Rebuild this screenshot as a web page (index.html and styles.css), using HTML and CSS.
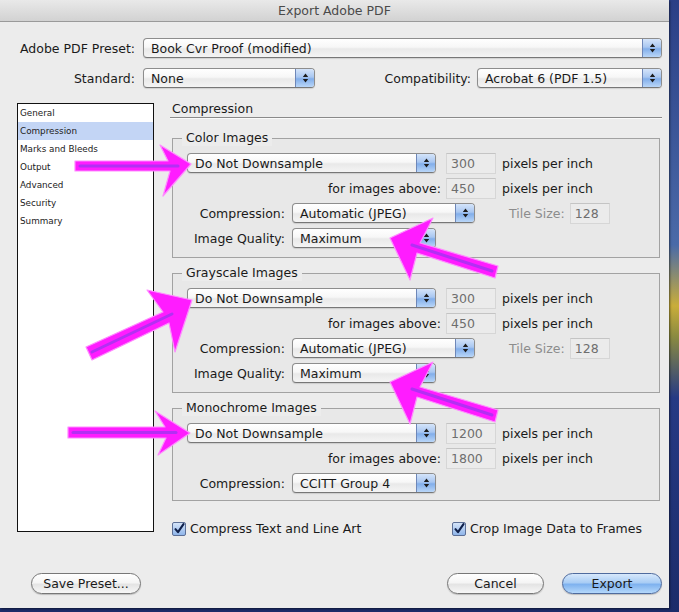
FILE: index.html
```html
<!DOCTYPE html>
<html>
<head>
<meta charset="utf-8">
<title>Export Adobe PDF</title>
<link rel="stylesheet" href="styles.css">
</head>
<body>
<div class="window">
  <div class="titlebar">Export Adobe PDF</div>
  <div class="content">
    <div class="row top-row">
      <span class="lbl lbl-top">Adobe PDF Preset:</span>
      <div class="popup popup-preset"><span class="ptext">Book Cvr Proof (modified)</span><span class="step"><svg width="7" height="12" viewBox="0 0 7 12"><path d="M3.5 1.5L6.2 5H0.8z M3.5 10.5L6.2 7H0.8z"/></svg></span></div>
    </div>
    <div class="row top-row row-standard">
      <span class="lbl lbl-top">Standard:</span>
      <div class="popup popup-standard"><span class="ptext">None</span><span class="step"><svg width="7" height="12" viewBox="0 0 7 12"><path d="M3.5 1.5L6.2 5H0.8z M3.5 10.5L6.2 7H0.8z"/></svg></span></div>
      <span class="lbl lbl-compat">Compatibility:</span>
      <div class="popup popup-compat"><span class="ptext">Acrobat 6 (PDF 1.5)</span><span class="step"><svg width="7" height="12" viewBox="0 0 7 12"><path d="M3.5 1.5L6.2 5H0.8z M3.5 10.5L6.2 7H0.8z"/></svg></span></div>
    </div>

    <div class="main">
      <ul class="sidebar">
        <li>General</li>
        <li class="selected">Compression</li>
        <li>Marks and Bleeds</li>
        <li>Output</li>
        <li>Advanced</li>
        <li>Security</li>
        <li>Summary</li>
      </ul>

      <div class="panel">
        <div class="panel-title">Compression</div>

        <div class="group">
          <span class="legend">Color Images</span>
          <div class="grow">
            <div class="popup w-sample"><span class="ptext">Do Not Downsample</span><span class="step"><svg width="7" height="12" viewBox="0 0 7 12"><path d="M3.5 1.5L6.2 5H0.8z M3.5 10.5L6.2 7H0.8z"/></svg></span></div>
            <span class="field f-res">300</span>
            <span class="unit">pixels per inch</span>
          </div>
          <div class="grow">
            <span class="lbl l-above">for images above:</span>
            <span class="field f-above">450</span>
            <span class="unit">pixels per inch</span>
          </div>
          <div class="grow">
            <span class="lbl l-short">Compression:</span>
            <div class="popup w-comp"><span class="ptext">Automatic (JPEG)</span><span class="step"><svg width="7" height="12" viewBox="0 0 7 12"><path d="M3.5 1.5L6.2 5H0.8z M3.5 10.5L6.2 7H0.8z"/></svg></span></div>
            <span class="lbl l-tile">Tile Size:</span>
            <span class="field f-tile">128</span>
          </div>
          <div class="grow">
            <span class="lbl l-short">Image Quality:</span>
            <div class="popup w-qual"><span class="ptext">Maximum</span><span class="step"><svg width="7" height="12" viewBox="0 0 7 12"><path d="M3.5 1.5L6.2 5H0.8z M3.5 10.5L6.2 7H0.8z"/></svg></span></div>
          </div>
        </div>

        <div class="group">
          <span class="legend">Grayscale Images</span>
          <div class="grow">
            <div class="popup w-sample"><span class="ptext">Do Not Downsample</span><span class="step"><svg width="7" height="12" viewBox="0 0 7 12"><path d="M3.5 1.5L6.2 5H0.8z M3.5 10.5L6.2 7H0.8z"/></svg></span></div>
            <span class="field f-res">300</span>
            <span class="unit">pixels per inch</span>
          </div>
          <div class="grow">
            <span class="lbl l-above">for images above:</span>
            <span class="field f-above">450</span>
            <span class="unit">pixels per inch</span>
          </div>
          <div class="grow">
            <span class="lbl l-short">Compression:</span>
            <div class="popup w-comp"><span class="ptext">Automatic (JPEG)</span><span class="step"><svg width="7" height="12" viewBox="0 0 7 12"><path d="M3.5 1.5L6.2 5H0.8z M3.5 10.5L6.2 7H0.8z"/></svg></span></div>
            <span class="lbl l-tile">Tile Size:</span>
            <span class="field f-tile">128</span>
          </div>
          <div class="grow">
            <span class="lbl l-short">Image Quality:</span>
            <div class="popup w-qual"><span class="ptext">Maximum</span><span class="step"><svg width="7" height="12" viewBox="0 0 7 12"><path d="M3.5 1.5L6.2 5H0.8z M3.5 10.5L6.2 7H0.8z"/></svg></span></div>
          </div>
        </div>

        <div class="group group-mono">
          <span class="legend">Monochrome Images</span>
          <div class="grow">
            <div class="popup w-sample"><span class="ptext">Do Not Downsample</span><span class="step"><svg width="7" height="12" viewBox="0 0 7 12"><path d="M3.5 1.5L6.2 5H0.8z M3.5 10.5L6.2 7H0.8z"/></svg></span></div>
            <span class="field f-res">1200</span>
            <span class="unit">pixels per inch</span>
          </div>
          <div class="grow">
            <span class="lbl l-above">for images above:</span>
            <span class="field f-above">1800</span>
            <span class="unit">pixels per inch</span>
          </div>
          <div class="grow">
            <span class="lbl l-short">Compression:</span>
            <div class="popup w-qual"><span class="ptext">CCITT Group 4</span><span class="step"><svg width="7" height="12" viewBox="0 0 7 12"><path d="M3.5 1.5L6.2 5H0.8z M3.5 10.5L6.2 7H0.8z"/></svg></span></div>
          </div>
        </div>

        <div class="checks">
          <label class="check"><span class="box"><svg width="12" height="12" viewBox="0 0 12 12"><path d="M2.5 6.2L5 9.2L10.5 1.2" fill="none" stroke="#10204a" stroke-width="2.1" stroke-linecap="round" stroke-linejoin="round"/></svg></span>Compress Text and Line Art</label>
          <label class="check check-crop"><span class="box"><svg width="12" height="12" viewBox="0 0 12 12"><path d="M2.5 6.2L5 9.2L10.5 1.2" fill="none" stroke="#10204a" stroke-width="2.1" stroke-linecap="round" stroke-linejoin="round"/></svg></span>Crop Image Data to Frames</label>
        </div>
      </div>
    </div>

    <div class="footer">
      <button class="btn btn-save">Save Preset...</button>
      <button class="btn btn-cancel">Cancel</button>
      <button class="btn btn-export">Export</button>
    </div>
  </div>

  <svg class="arrows" width="669" height="608" viewBox="0 0 669 608">
    <g fill="#ff1cff" stroke="#ff8cff" stroke-width="1.2" stroke-linejoin="round">
      <polygon points="75,161 168,161 160,145 191,164 163,196 170,171 75,171"/>
      <polygon points="390,238 433,218 420,243 498,266 495,278 417,253 410,280"/>
      <polygon points="192,300 147,290 163,312 86,347 92,360 169,323 175,352"/>
      <polygon points="390,382 433,362 420,387 498,410 495,422 417,397 410,424"/>
      <polygon points="68,427 165,427 155,411 190,433 158,455 166,438 68,438"/>
    </g>
    <g stroke="#9a36f0" stroke-width="3" stroke-linecap="round" fill="none" opacity="0.75">
      <path d="M80 166 L178 166"/>
      <path d="M412 245 L492 271"/>
      <path d="M92 352 L172 314"/>
      <path d="M412 389 L492 415"/>
      <path d="M73 432.5 L176 432.5"/>
    </g>
  </svg>
</div>
</body>
</html>
```

FILE: styles.css
```css
* { box-sizing: border-box; }

html, body {
  margin: 0;
  padding: 0;
}

body {
  width: 679px;
  height: 612px;
  overflow: hidden;
  background: linear-gradient(to bottom, #2b3f86 0%, #4a6aa8 40%, #c9ad3a 50%, #8a8a40 55%, #263a84 65%, #1c2c6a 100%);
  font-family: "DejaVu Sans", "Liberation Sans", sans-serif;
  font-size: 12.5px;
  color: #1a1a1a;
}

.window {
  position: relative;
  width: 669px;
  height: 608px;
  background: #ececec;
  box-shadow: 1px 1px 2px rgba(0,0,0,0.5);
}

.titlebar {
  height: 22px;
  line-height: 21px;
  text-align: center;
  font-size: 12.5px;
  color: #4a4a4a;
  background: linear-gradient(#e9e9e9, #d2d2d2);
  border-bottom: 1px solid #9a9a9a;
}

.content {
  padding: 16px 7px 0 7px;
}

.row {
  display: flex;
  align-items: center;
  height: 20px;
}

.row-standard {
  margin-top: 10px;
}

.lbl {
  white-space: nowrap;
}

.lbl-top {
  width: 128px;
  text-align: right;
  margin-right: 8px;
}

.lbl-compat {
  margin-left: auto;
  margin-right: 6px;
}

/* Aqua pop-up button */
.popup {
  position: relative;
  display: flex;
  align-items: center;
  height: 20px;
  border: 1px solid #8d8d8d;
  border-bottom-color: #777;
  border-radius: 4px;
  background: linear-gradient(#ffffff 0%, #f7f7f7 45%, #e9e9e9 55%, #f4f4f4 100%);
  box-shadow: 0 1px 1px rgba(0,0,0,0.12);
  overflow: hidden;
}

.ptext {
  flex: 1;
  padding-left: 7px;
  white-space: nowrap;
}

.step {
  width: 19px;
  height: 100%;
  display: flex;
  align-items: center;
  justify-content: center;
  border-left: 1px solid #6e87b8;
  background: linear-gradient(#d4e4fa 0%, #a9c7f1 45%, #82aeea 55%, #b9d6f8 100%);
}

.step svg path { fill: #1d1d1d; }

.popup-preset { flex: 1; }
.popup-standard { width: 172px; }
.popup-compat { width: 185px; }

/* main area */
.main {
  display: flex;
  align-items: flex-start;
  margin-top: 15px;
  padding-left: 10px;
}

.sidebar {
  list-style: none;
  margin: 0;
  padding: 0;
  width: 137px;
  height: 429px;
  background: #ffffff;
  border: 1px solid #111;
  font-size: 8.8px;
}

.sidebar li {
  height: 18px;
  line-height: 18px;
  padding-left: 2px;
  color: #222;
}

.sidebar li.selected {
  background: #c3d5f5;
}

.panel {
  flex: 1;
  margin-left: 16px;
}

.panel-title {
  font-size: 12.5px;
  line-height: 12px;
  padding-bottom: 2px;
  padding-left: 2px;
  border-bottom: 1px solid #8a8a8a;
  box-shadow: 0 1px 0 #fafafa;
}

.group {
  position: relative;
  margin: 20px 2px 0 2px;
  padding: 14px 0 9px 14px;
  border: 1px solid #a2a2a2;
  background: #e8e8e8;
  display: flex;
  flex-direction: column;
  gap: 5px;
}

.group + .group {
  margin-top: 15px;
}

.group-mono {
  padding-bottom: 7px;
}

.legend {
  position: absolute;
  top: -9px;
  left: 9px;
  padding: 0 4px;
  line-height: 16px;
  font-size: 12.5px;
  background: #ececec;
}

.grow {
  display: flex;
  align-items: center;
  height: 20px;
}

.w-sample { width: 249px; }
.w-comp { width: 183px; }
.w-qual { width: 144px; }

.field {
  height: 21px;
  line-height: 20px;
  padding-left: 4px;
  border: 1px solid #d6d6d6;
  border-top-color: #c4c4c4;
  background: #ebebeb;
  color: #6e6e6e;
}

.f-res { width: 50px; margin-left: 10px; }
.f-above { width: 50px; margin-left: 5px; }
.f-tile { width: 40px; margin-left: 5px; }

.unit { margin-left: 6px; }

.l-above { width: 254px; text-align: right; }
.l-short { width: 98px; text-align: right; margin-right: 7px; }
.l-tile { margin-left: 34px; color: #8c8c8c; }

.checks {
  display: flex;
  align-items: center;
  margin-top: 20px;
  padding-left: 2px;
}

.check {
  display: flex;
  align-items: center;
  gap: 4px;
}

.check-crop {
  margin-left: auto;
  margin-right: 20px;
}

.box {
  width: 14px;
  height: 14px;
  border: 1px solid #5c6f96;
  border-radius: 2px;
  background: linear-gradient(#d5e4f8, #8fb5ea);
  display: flex;
  align-items: center;
  justify-content: center;
}

.footer {
  display: flex;
  align-items: center;
  margin-top: 37px;
  padding-left: 24px;
}

.btn {
  height: 21px;
  padding: 0;
  border: 1px solid #777;
  border-radius: 11px;
  background: linear-gradient(#ffffff 0%, #f5f5f5 45%, #e4e4e4 55%, #f7f7f7 100%);
  box-shadow: 0 1px 1px rgba(0,0,0,0.2);
  font-family: "DejaVu Sans", "Liberation Sans", sans-serif;
  font-size: 12.5px;
  color: #1a1a1a;
}

.btn-save { width: 110px; }
.btn-cancel { width: 97px; margin-left: auto; }
.btn-export {
  width: 100px;
  margin-left: 18px;
  border-color: #4f6b9e;
  background: linear-gradient(#d7e8fb 0%, #a9cdf5 45%, #7fb2ef 55%, #b4d8fb 100%);
}

.arrows {
  position: absolute;
  top: 0;
  left: 0;
  pointer-events: none;
}
```
